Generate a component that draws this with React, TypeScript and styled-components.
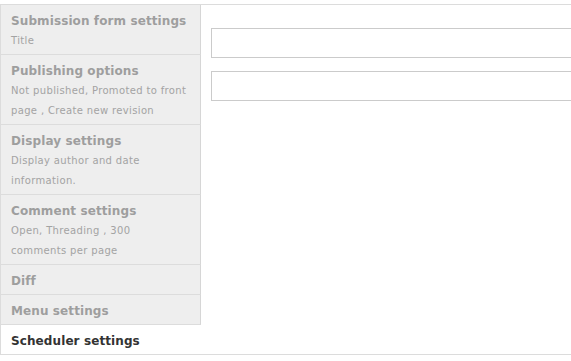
import { FC } from "react";
import styled, { createGlobalStyle } from "styled-components";

interface TabData {
  title: string;
  summary?: string;
}

const tabs: TabData[] = [
  { title: "Submission form settings", summary: "Title" },
  {
    title: "Publishing options",
    summary: "Not published, Promoted to front page , Create new revision",
  },
  { title: "Display settings", summary: "Display author and date information." },
  { title: "Comment settings", summary: "Open, Threading , 300 comments per page" },
  { title: "Diff" },
  { title: "Menu settings" },
  { title: "Scheduler settings" },
];

const GlobalStyle = createGlobalStyle`
  html, body {
    margin: 0;
    padding: 0;
    background: #fff;
    overflow: hidden;
  }
  body {
    font-family: "DejaVu Sans", Verdana, sans-serif;
  }
`;

const Page = styled.div`
  padding-top: 4px;
  width: 640px;
`;

const VerticalTabs = styled.div`
  display: flex;
  border: 1px solid #dcdcdc;
  border-right: none;
`;

const TabList = styled.ul`
  list-style: none;
  margin: 0;
  padding: 0;
  width: 200px;
  flex: 0 0 200px;
  background: #eee;
`;

const TabItem = styled.li<{ $active?: boolean }>`
  background: ${(p) => (p.$active ? "#fff" : "#eee")};
  border-right: 1px solid ${(p) => (p.$active ? "#fff" : "#d6d6d6")};
  border-bottom: ${(p) => (p.$active ? "none" : "1px solid #dcdcdc")};
  padding: 7px 13px 4px 10px;
`;

const TabTitle = styled.a<{ $active?: boolean }>`
  display: block;
  font-size: 12px;
  font-weight: bold;
  line-height: 18px;
  letter-spacing: 0.1px;
  white-space: nowrap;
  color: ${(p) => (p.$active ? "#333" : "#9e9e9e")};
  text-decoration: none;
  cursor: pointer;
`;

const TabSummary = styled.span`
  display: block;
  font-size: 10px;
  line-height: 20px;
  letter-spacing: 0.35px;
  margin-top: 1px;
  margin-bottom: -1px;
  color: #a3a3a3;
`;

const Pane = styled.div`
  flex: 1;
  padding: 23px 0 0 10px;
`;

const TextField = styled.input`
  display: block;
  box-sizing: border-box;
  width: 100%;
  height: 30px;
  margin: 0 0 13px;
  border: 1px solid #cbcbcb;
  border-right: none;
  padding: 4px 6px;
  background: #fff;
  outline: none;
`;

const App: FC = () => {
  const activeIdx = tabs.length - 1;
  return (
    <Page>
      <GlobalStyle />
      <VerticalTabs>
        <TabList>
          {tabs.map((tab, idx) => (
            <TabItem key={tab.title} $active={idx === activeIdx}>
              <TabTitle $active={idx === activeIdx}>{tab.title}</TabTitle>
              {tab.summary && <TabSummary>{tab.summary}</TabSummary>}
            </TabItem>
          ))}
        </TabList>
        <Pane>
          <TextField type="text" />
          <TextField type="text" />
        </Pane>
      </VerticalTabs>
    </Page>
  );
};

export default App;
